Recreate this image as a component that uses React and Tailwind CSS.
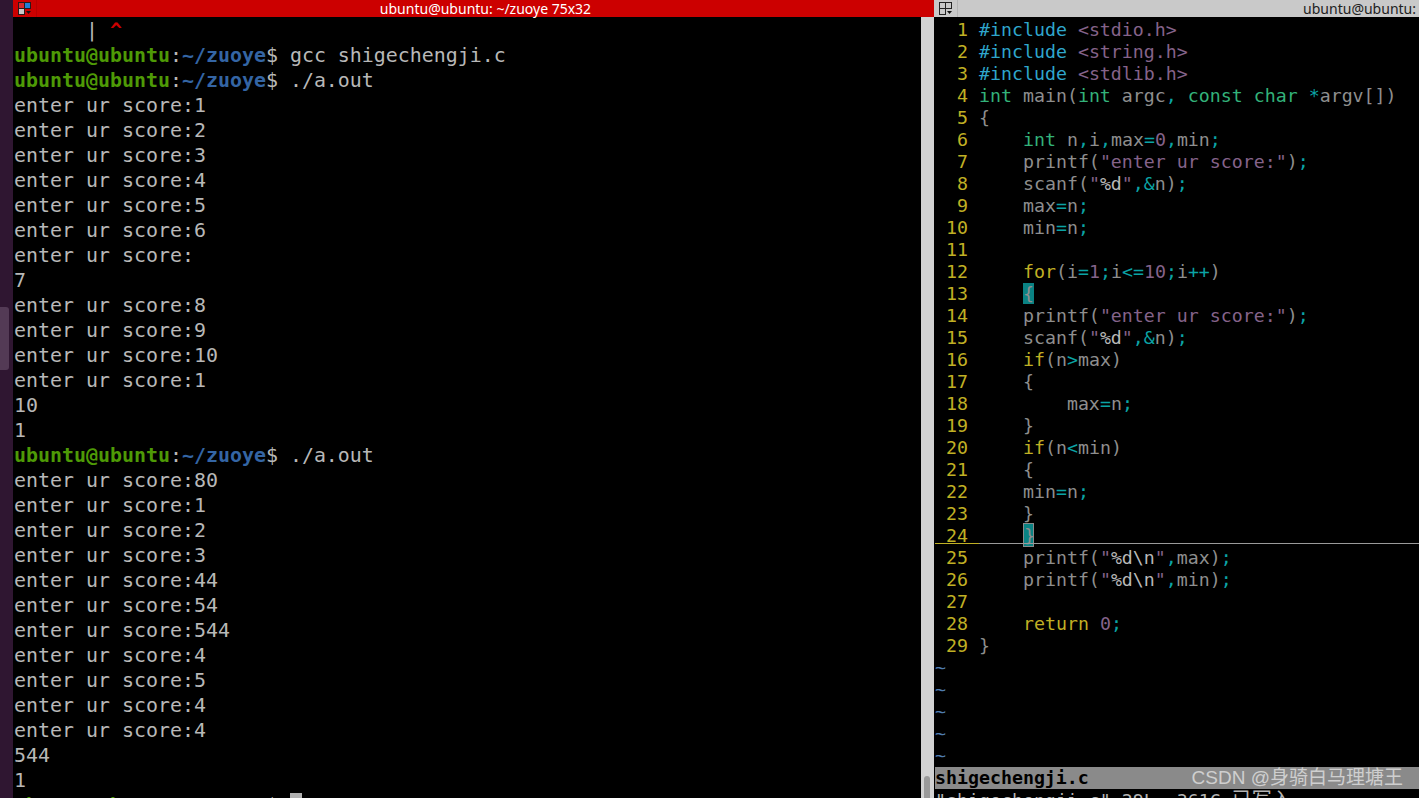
import React from 'react'

const mono = "font-['DejaVu_Sans_Mono',monospace]"

// syntax colours
const d = 'text-[#8e8e8e]'
const s = 'text-[#85638a]'
const o = 'text-[#0ba3a5]'
const t = 'text-[#33b27a]'
const p = 'text-[#2fa6cc]'
const c = 'text-[#c0b024]'
const f = 'text-[#b8b8b8]'

const printfScore = [['    printf(', d], ['"enter ur score:"', s], [')', d], [';', o]]
const scanfN = [['    scanf(', d], ['"', s], ['%d', f], ['"', s], [',&', o], ['n', d], [')', d], [';', o]]

const codeLines = [
  [['#include ', p], ['<stdio.h>', s]],
  [['#include ', p], ['<string.h>', s]],
  [['#include ', p], ['<stdlib.h>', s]],
  [['int ', t], ['main(', d], ['int ', t], ['argc', d], [', ', o], ['const char ', t], ['*', o], ['argv[])', d]],
  [['{', d]],
  [['    ', d], ['int ', t], ['n', d], [',', o], ['i', d], [',', o], ['max', d], ['=', o], ['0', s], [',', o], ['min', d], [';', o]],
  printfScore,
  scanfN,
  [['    max', d], ['=', o], ['n', d], [';', o]],
  [['    min', d], ['=', o], ['n', d], [';', o]],
  [],
  [['    ', d], ['for', c], ['(i', d], ['=', o], ['1', s], [';', o], ['i', d], ['<=', o], ['10', s], [';', o], ['i', d], ['++', o], [')', d]],
  'open',
  printfScore,
  scanfN,
  [['    ', d], ['if', c], ['(n', d], ['>', o], ['max)', d]],
  [['    {', d]],
  [['        max', d], ['=', o], ['n', d], [';', o]],
  [['    }', d]],
  [['    ', d], ['if', c], ['(n', d], ['<', o], ['min)', d]],
  [['    {', d]],
  [['    min', d], ['=', o], ['n', d], [';', o]],
  [['    }', d]],
  'close',
  [['    printf(', d], ['"', s], ['%d\\n', f], ['"', s], [',', o], ['max', d], [')', d], [';', o]],
  [['    printf(', d], ['"', s], ['%d\\n', f], ['"', s], [',', o], ['min', d], [')', d], [';', o]],
  [],
  [['    ', d], ['return ', c], ['0', s], [';', o]],
  [['}', d]],
]

const leftRows = [
  { caret: true },
  { cmd: 'gcc shigechengji.c' },
  { cmd: './a.out' },
  'enter ur score:1', 'enter ur score:2', 'enter ur score:3', 'enter ur score:4',
  'enter ur score:5', 'enter ur score:6', 'enter ur score:', '7', 'enter ur score:8',
  'enter ur score:9', 'enter ur score:10', 'enter ur score:1', '10', '1',
  { cmd: './a.out' },
  'enter ur score:80', 'enter ur score:1', 'enter ur score:2', 'enter ur score:3',
  'enter ur score:44', 'enter ur score:54', 'enter ur score:544', 'enter ur score:4',
  'enter ur score:5', 'enter ur score:4', 'enter ur score:4', '544', '1',
  { cmd: '', cursor: true },
]

function GridIcon({ colored }) {
  const line = colored ? '#2a1a1a' : '#222'
  return (
    <svg width="14" height="14" viewBox="0 0 14 14" className="shrink-0">
      <rect x="0.5" y="0.5" width="6" height="6" fill={colored ? '#d8282c' : 'none'} stroke={line} />
      <rect x="6.5" y="0.5" width="6" height="6" fill={colored ? '#1f7fd6' : 'none'} stroke={line} />
      <rect x="0.5" y="6.5" width="6" height="6" fill={colored ? '#c8c8c8' : 'none'} stroke={line} />
      <path d="M8 9h5l-2.5 3z" fill="#111" />
    </svg>
  )
}

function Prompt() {
  return (
    <>
      <span className="font-bold text-[#4e9a06]">ubuntu@ubuntu</span>
      <span>:</span>
      <span className="font-bold text-[#3465a4]">~/zuoye</span>
      <span>$ </span>
    </>
  )
}

function LeftRow({ row }) {
  let inner = row
  if (row.caret) {
    inner = (
      <>
        {'      | '}
        <span className="font-bold text-[#cc0000]">^</span>
      </>
    )
  } else if (typeof row === 'object') {
    inner = (
      <>
        <Prompt />
        {row.cmd}
        {row.cursor && <span className="inline-block h-[25px] w-3 align-top bg-[#b0b0b0]" />}
      </>
    )
  }
  return <div className="h-[25px] leading-[25px] whitespace-pre">{inner}</div>
}

function CodeRow({ num, tokens }) {
  return (
    <div className="relative flex h-[22px] leading-[22px] whitespace-pre">
      <span className="w-[33px] text-right text-[#c0b024]">{num}</span>
      <span className="w-[11px]" />
      {tokens === 'open' && (
        <span>
          {'    '}
          <span className="inline-block h-[21px] w-[11px] bg-[#0a8283] leading-[22px] text-[#8e8e8e]">{'{'}</span>
        </span>
      )}
      {tokens === 'close' && (
        <>
          <span>
            {'    '}
            <span className="inline-block h-6 w-[11px] -translate-y-0.5 border border-[#8a8a8a] bg-[#0a8283] leading-[24px] text-[#8e8e8e]">{'}'}</span>
          </span>
          <span className="absolute inset-x-0 bottom-[3px] flex h-px">
            <span className="w-[44px] bg-[#c0b024]" />
            <span className="flex-1 bg-[#9a9a9a]" />
          </span>
        </>
      )}
      {Array.isArray(tokens) && tokens.map(([text, color], i) => (
        <span key={i} className={color}>{text}</span>
      ))}
    </div>
  )
}

export default function App() {
  return (
    <div className="relative flex h-[798px] w-[1419px] overflow-hidden bg-black">
      {/* launcher edge */}
      <div className="w-[13px] shrink-0 bg-[#2f1631] pt-[307px]">
        <div className="h-[63px] w-[9px] rounded-r-[3px] bg-[#533a55]" />
      </div>

      {/* left terminal */}
      <div className="flex w-[921px] shrink-0 flex-col">
        <div className="relative flex h-[17px] shrink-0 items-center justify-center bg-[#cc0000] pl-6">
          <div className="absolute left-0 top-0 flex h-[17px] w-6 items-center justify-center border-r border-[#b80000] pl-px">
            <GridIcon colored />
          </div>
          <span className="font-['Noto_Sans',sans-serif] text-[14px] leading-none text-white">ubuntu@ubuntu: ~/zuoye 75x32</span>
        </div>
        <div className="flex min-h-0 flex-1">
          <div className={`${mono} w-[908px] overflow-hidden pl-px pt-px text-[19.93px] text-[#b8b8b8]`}>
            {leftRows.map((row, i) => <LeftRow key={i} row={row} />)}
          </div>
          <div className="flex w-[13px] flex-col justify-end bg-[#d2d2d2] pl-[3px]">
            <div className="h-[22px] w-[6px] rounded-t-[3px] bg-[#9a9a9a]" />
          </div>
        </div>
      </div>

      {/* right terminal */}
      <div className="flex min-w-0 flex-1 flex-col pl-px">
        <div className="-ml-px flex h-[17px] shrink-0 items-center justify-between bg-[#c9c9c9] pr-[3px]">
          <div className="flex h-[17px] w-6 items-center justify-center border-r border-[#b4b4b4] pl-px">
            <GridIcon />
          </div>
          <span className="font-['Noto_Sans',sans-serif] text-[14px] leading-none text-[#222]">ubuntu@ubuntu:</span>
        </div>
        <div className={`${mono} min-h-0 flex-1 overflow-hidden pt-0.5 text-[18.25px]`}>
          {codeLines.map((tokens, i) => <CodeRow key={i} num={i + 1} tokens={tokens} />)}
          {[0, 1, 2, 3, 4].map((i) => (
            <div key={i} className="h-[22px] leading-[22px] text-[#4f7cae]">~</div>
          ))}
          <div className="h-[22px] bg-[#8a8a8a] leading-[22px] font-bold text-black">shigechengji.c</div>
          <div className="h-[22px] leading-[22px] whitespace-pre text-[#b4b4b4] font-['DejaVu_Sans_Mono','Noto_Sans_CJK_SC',monospace]">
            "shigechengji.c" 29L, 361C <span className="text-[20px]">已写入</span>
          </div>
        </div>
      </div>

      {/* CSDN watermark */}
      <div className="absolute bottom-2 right-4 font-['Liberation_Sans','Noto_Sans_CJK_SC',sans-serif] text-[19px] leading-[24px] text-white/60">
        CSDN @身骑白马理塘王
      </div>
    </div>
  )
}
